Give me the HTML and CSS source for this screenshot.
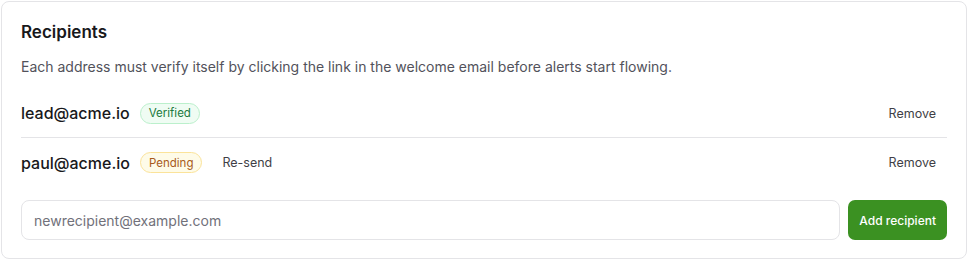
FILE: index.html
```html
<!DOCTYPE html>
<html lang="en">
<head>
    <meta charset="UTF-8">
    <title>Recipients</title>
    <link rel="stylesheet" href="styles.css">
</head>
<body>
    <div class="card">
        <h2 class="card-title">Recipients</h2>
        <p class="card-desc">Each address must verify itself by clicking the link in the welcome email before alerts start flowing.</p>

        <ul class="recipient-list">
            <li class="recipient">
                <span class="recipient-email">lead@acme.io</span>
                <span class="badge badge-verified">Verified</span>
                <button class="link-btn remove-btn">Remove</button>
            </li>
            <li class="recipient">
                <span class="recipient-email">paul@acme.io</span>
                <span class="badge badge-pending">Pending</span>
                <button class="link-btn">Re-send</button>
                <button class="link-btn remove-btn">Remove</button>
            </li>
        </ul>

        <form class="add-form" onsubmit="return false">
            <input type="email" class="add-input" placeholder="newrecipient@example.com">
            <button type="submit" class="add-btn">Add recipient</button>
        </form>
    </div>
</body>
</html>
```

FILE: styles.css
```css
* {
    margin: 0;
    padding: 0;
    box-sizing: border-box;
    font-family: Inter, 'Liberation Sans', sans-serif;
}

body {
    background-color: #ffffff;
    color: #18181b;
    padding: 1px;
}

.card {
    border: 1px solid #e4e4e7;
    border-radius: 8px;
    padding: 17px 19px 18px 19px;
    background-color: #ffffff;
}

.card-title {
    font-size: 17px;
    font-weight: 600;
    line-height: 26px;
    color: #18181b;
}

.card-desc {
    margin-top: 12px;
    font-size: 14px;
    line-height: 20px;
    color: #52525b;
}

.recipient-list {
    list-style: none;
    margin-top: 12px;
}

.recipient {
    display: flex;
    align-items: center;
    height: 49px;
    border-bottom: 1px solid #e4e4e7;
}

.recipient:last-child {
    border-bottom: none;
}

.recipient-email {
    font-size: 16px;
    font-weight: 500;
    color: #18181b;
    margin-right: 10px;
}

.badge {
    display: inline-flex;
    align-items: center;
    height: 21px;
    padding: 0 8px;
    border-radius: 999px;
    font-size: 11.5px;
    font-weight: 400;
    border: 1px solid;
}

.badge-verified {
    background-color: #effcf3;
    border-color: #bbf0cc;
    color: #217a3e;
}

.badge-pending {
    background-color: #fefbe8;
    border-color: #fbe39a;
    color: #a75a1b;
}

.link-btn {
    background: none;
    border: none;
    padding: 6px 11px 6px 10px;
    margin-left: 10px;
    font-size: 12.5px;
    font-weight: 400;
    color: #3f3f46;
    cursor: pointer;
}

.remove-btn {
    margin-left: auto;
}

.add-form {
    display: flex;
    gap: 8px;
    margin-top: 13px;
}

.add-input {
    flex: 1;
    height: 40px;
    padding: 0 12px;
    border: 1px solid #e4e4e7;
    border-radius: 8px;
    font-size: 14px;
    color: #18181b;
    outline: none;
}

.add-input::placeholder {
    color: #71717a;
}

.add-btn {
    height: 40px;
    padding: 0 11px;
    border: none;
    border-radius: 7px;
    background-color: #3b9122;
    color: #ffffff;
    font-size: 12px;
    font-weight: 500;
    cursor: pointer;
}
```
